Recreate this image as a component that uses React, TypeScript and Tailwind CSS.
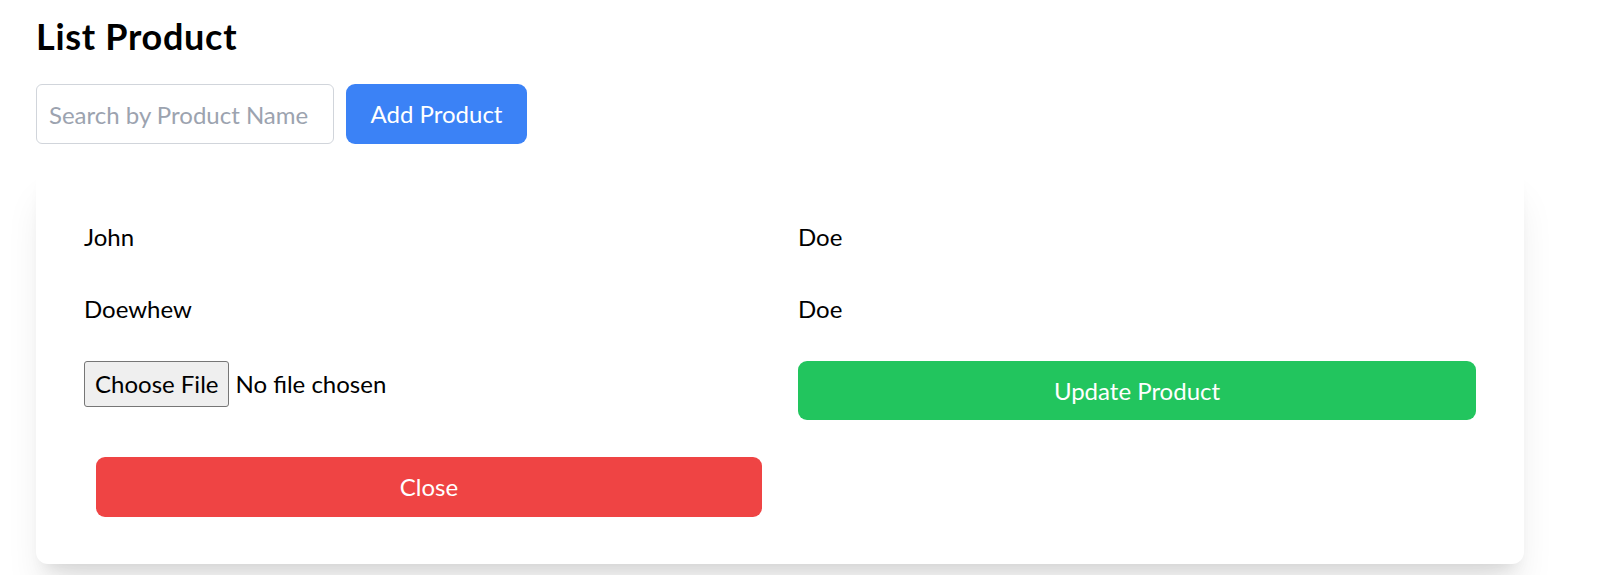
export default function App() {
  return (
    <div className="min-h-screen bg-white px-[36px] pt-[12px] font-['Lato','Noto_Sans',sans-serif] text-black">
      <h1 className="text-[36px] font-bold leading-[48px] tracking-[0.7px]">List Product</h1>

      <div className="mt-[24px] flex gap-[12px]">
        <input
          type="text"
          placeholder="Search by Product Name"
          className="h-[60px] w-[298px] rounded-[6px] border border-[#d1d5db] px-[12px] text-[24px] placeholder:text-[#9ca3af] outline-none"
        />
        <button
          type="button"
          className="h-[60px] w-[181px] rounded-[9px] bg-[#3b82f6] text-[24px] text-white"
        >
          Add Product
        </button>
      </div>

      <section className="mt-[22px] w-[1488px] rounded-[12px] bg-white px-[48px] pb-[47px] pt-[35px] shadow-[0_30px_38px_-8px_rgba(0,0,0,0.1),0_12px_15px_-9px_rgba(0,0,0,0.1)]">
        <div className="grid grid-cols-2 gap-x-[36px] text-[24px] leading-[36px]">
          <div className="py-[18px]">John</div>
          <div className="py-[18px]">Doe</div>
          <div className="py-[18px]">Doewhew</div>
          <div className="py-[18px]">Doe</div>

          <div className="mt-[16px] flex items-start">
            <label className="flex items-center">
              <span className="flex h-[46px] items-center rounded-[3px] border border-[#767676] bg-[#efefef] px-[10px]">
                Choose File
              </span>
              <span className="ml-[6px]">No file chosen</span>
            </label>
          </div>
          <div className="mt-[16px]">
            <button
              type="button"
              className="h-[59px] w-full rounded-[9px] bg-[#22c55e] text-white"
            >
              Update Product
            </button>
          </div>
        </div>

        <button
          type="button"
          className="ml-[12px] mt-[37px] h-[60px] w-[666px] rounded-[9px] bg-[#ef4444] text-[24px] text-white"
        >
          Close
        </button>
      </section>
    </div>
  );
}
